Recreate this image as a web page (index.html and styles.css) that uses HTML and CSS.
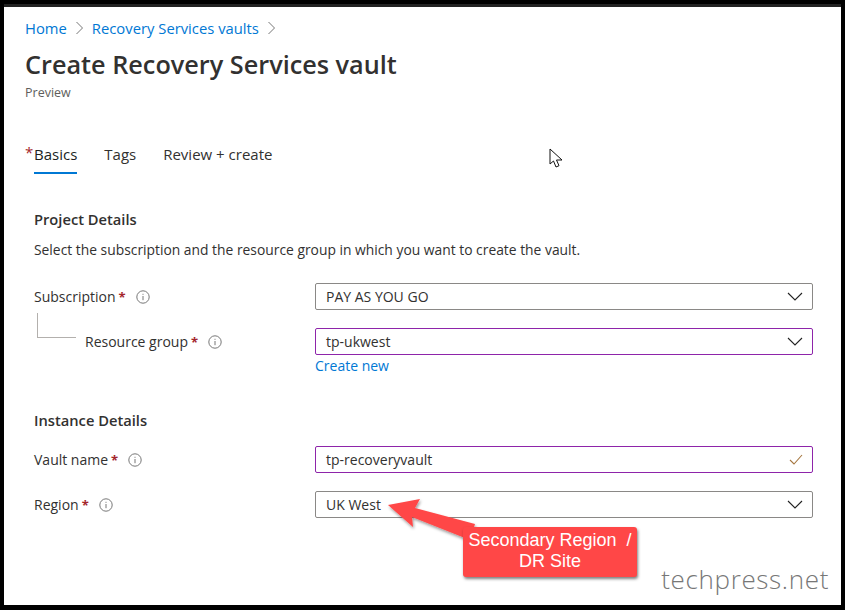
FILE: index.html
```html
<!DOCTYPE html>
<html lang="en">
<head>
    <meta charset="UTF-8">
    <title>Create Recovery Services vault</title>
    <link rel="stylesheet" href="styles.css">
</head>
<body>
<div class="screen">
    <nav class="crumbs">
        <a href="#">Home</a>
        <svg class="crumb-sep" width="7" height="14" viewBox="0 0 7 14"><path d="M.5 1l6 6-6 6" fill="none" stroke="#777" stroke-width="1"/></svg>
        <a href="#">Recovery Services vaults</a>
        <svg class="crumb-sep" width="7" height="14" viewBox="0 0 7 14"><path d="M.5 1l6 6-6 6" fill="none" stroke="#777" stroke-width="1"/></svg>
    </nav>
    <h1>Create Recovery Services vault</h1>
    <p class="subtitle">Preview</p>

    <div class="tabs">
        <div class="tab tab-active"><span class="tab-star">*</span>Basics</div>
        <div class="tab">Tags</div>
        <div class="tab">Review + create</div>
    </div>

    <section class="section-project">
        <h2>Project Details</h2>
        <p class="hint">Select the subscription and the resource group in which you want to create the vault.</p>

        <div class="row">
            <label class="field-label">Subscription <b>*</b>
                <svg class="info" width="14" height="14" viewBox="0 0 14 14"><circle cx="7" cy="7" r="6.2" fill="none" stroke="#777"/><path d="M7 6v4.2M7 3.8v1" stroke="#777"/></svg>
            </label>
            <div class="input">PAY AS YOU GO
                <svg class="chev" width="16" height="9" viewBox="0 0 16 9"><path d="M1 1l7 7 7-7" fill="none" stroke="#222" stroke-width="1.1"/></svg>
            </div>
        </div>
        <div class="row row-child">
            <span class="tree-line"></span>
            <label class="field-label">Resource group <b>*</b>
                <svg class="info" width="14" height="14" viewBox="0 0 14 14"><circle cx="7" cy="7" r="6.2" fill="none" stroke="#777"/><path d="M7 6v4.2M7 3.8v1" stroke="#777"/></svg>
            </label>
            <div class="input input-touched">tp-ukwest
                <svg class="chev" width="16" height="9" viewBox="0 0 16 9"><path d="M1 1l7 7 7-7" fill="none" stroke="#222" stroke-width="1.1"/></svg>
            </div>
        </div>
        <a class="create-new" href="#">Create new</a>
    </section>

    <section class="section-instance">
        <h2>Instance Details</h2>
        <div class="row">
            <label class="field-label">Vault name <b>*</b>
                <svg class="info" width="14" height="14" viewBox="0 0 14 14"><circle cx="7" cy="7" r="6.2" fill="none" stroke="#777"/><path d="M7 6v4.2M7 3.8v1" stroke="#777"/></svg>
            </label>
            <div class="input input-touched">tp-recoveryvault
                <svg class="chev" width="14" height="11" viewBox="0 0 14 11"><path d="M1 6l4 4 8-9" fill="none" stroke="#a5763f" stroke-width="1.1"/></svg>
            </div>
        </div>
        <div class="row">
            <label class="field-label">Region <b>*</b>
                <svg class="info" width="14" height="14" viewBox="0 0 14 14"><circle cx="7" cy="7" r="6.2" fill="none" stroke="#777"/><path d="M7 6v4.2M7 3.8v1" stroke="#777"/></svg>
            </label>
            <div class="input">UK West
                <svg class="chev" width="16" height="9" viewBox="0 0 16 9"><path d="M1 1l7 7 7-7" fill="none" stroke="#222" stroke-width="1.1"/></svg>
            </div>
        </div>
    </section>

    <!-- annotations on top of the screenshot -->
    <svg class="cursor" width="14" height="20" viewBox="0 0 14 20"><path d="M1 1v15l3.500-3 2.500 6 3-1.300-2.500-5.700H13z" fill="#fff" stroke="#111"/></svg>
    <svg class="arrow" width="100" height="50" viewBox="0 0 100 50">
        <defs><filter id="sh"><feDropShadow dx="1" dy="2" stdDeviation="1.500" flood-color="#000" flood-opacity=".4"/></filter></defs>
        <path d="M4 8L36 2l-5 9 60 16-5 16-58-23 1 10z" fill="#ff4747" filter="url(#sh)"/>
    </svg>
    <div class="callout">Secondary Region&nbsp; /<br>DR Site</div>
    <div class="watermark">techpress.net</div>
</div>
</body>
</html>
```

FILE: styles.css
```css
html, body {
    margin: 0;
    height: 100%;
    background-color: #000;
}
.screen {
    position: relative;
    box-sizing: border-box;
    width: 837px;
    height: 601px;
    margin: 4px 0 0 4px;
    padding: 13px 28px 0 21px;
    border-top: 3px solid #222;
    background-color: #fff;
    font-family: "Open Sans", sans-serif;
    font-size: 14px;
    color: #323130;
    overflow: hidden;
}
.crumbs {
    display: flex;
    align-items: center;
    gap: 9px;
    height: 16px;
    font-size: 14.8px;
}
.crumbs a,
.create-new {
    color: #0078d4;
    text-decoration: none;
}
.crumb-sep {
    flex: none;
}
h1 {
    margin: 10px 0 0;
    font-size: 25.25px;
    line-height: 36px;
    font-weight: 600;
    color: #323130;
}
.subtitle {
    margin: 3px 0 0;
    font-size: 12.5px;
    line-height: 16px;
    color: #605e5c;
}
.tabs {
    display: flex;
    gap: 27px;
    margin-top: 44px;
    font-size: 15px;
}
.tab {
    position: relative;
    padding-bottom: 9px;
    line-height: 18px;
}
.tab-active {
    margin-left: 9px;
    border-bottom: 2px solid #0078d4;
    color: #201f1e;
}
.tab-star {
    position: absolute;
    left: -9px;
    top: -2px;
    color: #a4262c;
}
.section-project {
    margin: 36px 0 0 9px;
}
.section-instance {
    margin: 36px 0 0 9px;
}
h2 {
    margin: 0;
    font-size: 14.7px;
    line-height: 18px;
    font-weight: 600;
}
.hint {
    margin: 13px 0 24px;
    font-size: 13.85px;
    line-height: 18px;
}
.section-instance h2 {
    margin-bottom: 17px;
}
.row {
    position: relative;
    display: flex;
    align-items: center;
    justify-content: space-between;
    margin-bottom: 18px;
}
.row-child {
    margin-bottom: 0;
}
.row-child .field-label {
    margin-left: 51px;
}
.tree-line {
    position: absolute;
    left: 3px;
    top: -15px;
    width: 38px;
    height: 24px;
    border-left: 1px solid #b3b0ad;
    border-bottom: 1px solid #b3b0ad;
}
.field-label {
    display: flex;
    align-items: center;
    gap: 3px;
}
.field-label b {
    font-size: 13px;
    font-weight: 700;
    color: #a4262c;
}
.info {
    margin-left: 7px;
}
.input {
    display: flex;
    align-items: center;
    justify-content: space-between;
    box-sizing: border-box;
    width: 498px;
    height: 27px;
    padding: 0 9px 0 10px;
    border: 1px solid #8a8886;
    border-radius: 2px;
}
.input-touched {
    border-color: #8e24aa;
}
.create-new {
    display: block;
    margin: 1px 0 0 281px;
    line-height: 19px;
}
.cursor {
    position: absolute;
    left: 545px;
    top: 141px;
}
.arrow {
    position: absolute;
    left: 380px;
    top: 490px;
}
.callout {
    position: absolute;
    left: 459px;
    top: 520px;
    width: 174px;
    height: 50px;
    padding-top: 3px;
    box-sizing: border-box;
    border-radius: 3px;
    background-color: #ff4747;
    box-shadow: 1px 2px 3px rgba(0, 0, 0, .5);
    color: #fff;
    font-family: "Liberation Sans", sans-serif;
    font-size: 18px;
    line-height: 21px;
    text-align: center;
}
.watermark {
    position: absolute;
    right: 12px;
    bottom: 8px;
    font-family: "Open Sans", sans-serif;
    font-size: 26px;
    font-weight: 300;
    letter-spacing: .65px;
    color: #777;
}
```
